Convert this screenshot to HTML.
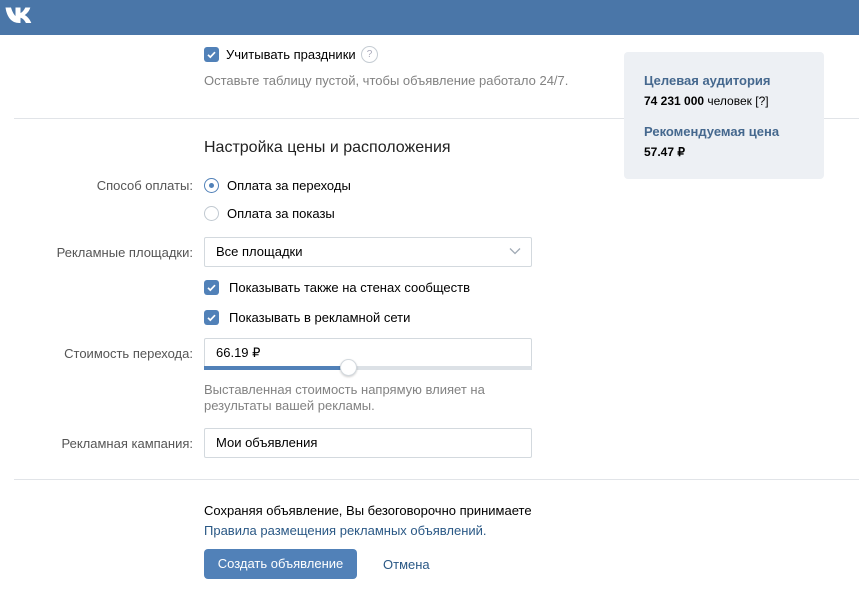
<!DOCTYPE html>
<html><head><meta charset="utf-8"><style>
*{margin:0;padding:0;box-sizing:border-box}
body{width:859px;height:602px;background:#fff;font-family:"Liberation Sans",sans-serif;font-size:13px;color:#000;position:relative;overflow:hidden}
.a{position:absolute;white-space:nowrap}
.hdr{left:0;top:0;width:859px;height:35px;background:#4a76a8}
.lbl{color:#555;text-align:right;width:193px;left:0}
.cb{width:15px;height:15px;background:#5181b8;border-radius:3px}
.cb svg{position:absolute;left:2px;top:2px}
.rd{width:15px;height:15px;border:1px solid #c1c9d1;border-radius:50%;background:#fff}
.rd.on{border-color:#5181b8}
.rd.on::after{content:"";position:absolute;left:4px;top:4px;width:5px;height:5px;border-radius:50%;background:#5181b8}
.box{border:1px solid #d3d9de;border-radius:2px;background:#fff;height:30px;padding:0 11px;line-height:28px}
.sep{height:1px;background:#e1e4e8;left:14px;width:845px}
.gray{color:#828282}
</style></head><body>
<div class="a hdr"></div>
<svg class="a" style="left:5px;top:6px" width="32" height="18" viewBox="0 0 32 18"><path d="M0.5 1.5h5.5c1 3.5 2.8 7 4.5 8.5V1.5h5v5.5c1.6-.5 3.7-3 4.8-5.5h5c-.9 3.5-3.6 6.2-5.6 7.6 2 .9 5 3.7 6.6 7.9h-5.4c-1.2-2.7-3.4-5-5.4-5.3V17h-1.2C6.6 17 1.9 11.2.5 1.5z" fill="#fff"/></svg>

<div class="a cb" style="left:204px;top:47px"><svg width="11" height="11" viewBox="0 0 11 11"><path d="M2 5.8l2.3 2.3L9 3.2" stroke="#fff" stroke-width="1.7" fill="none"/></svg></div>
<div class="a" style="left:226px;top:47px">Учитывать праздники</div>
<div class="a" style="left:361px;top:46px;width:17px;height:17px;border:1px solid #c5ccd3;border-radius:50%;color:#aab;font-size:10px;text-align:center;line-height:15px">?</div>
<div class="a gray" style="left:204px;top:73px">Оставьте таблицу пустой, чтобы объявление работало 24/7.</div>

<div class="a sep" style="top:118px"></div>
<div class="a" style="left:624px;top:52px;width:200px;height:127px;background:#edf0f4;border-radius:4px"></div>
<div class="a" style="left:644px;top:73px;color:#45688e;font-weight:bold;font-size:13px">Целевая аудитория</div>
<div class="a" style="left:644px;top:94px;font-size:12px"><b>74 231 000</b> человек [?]</div>
<div class="a" style="left:644px;top:124px;color:#45688e;font-weight:bold;font-size:13px">Рекомендуемая цена</div>
<div class="a" style="left:644px;top:145px;font-size:12px;font-weight:bold">57.47 ₽</div>

<div class="a" style="left:204px;top:139px;font-size:16px;color:#222">Настройка цены и расположения</div>

<div class="a lbl" style="top:178px">Способ оплаты:</div>
<div class="a rd on" style="left:204px;top:178px"></div>
<div class="a" style="left:227px;top:178px">Оплата за переходы</div>
<div class="a rd" style="left:204px;top:206px"></div>
<div class="a" style="left:227px;top:206px">Оплата за показы</div>

<div class="a lbl" style="top:245px">Рекламные площадки:</div>
<div class="a box" style="left:204px;top:237px;width:328px">Все площадки</div>
<svg class="a" style="left:509px;top:247px" width="12" height="8" viewBox="0 0 12 8"><path d="M1 1.5l5 5 5-5" stroke="#a0aab5" stroke-width="1.3" fill="none"/></svg>

<div class="a cb" style="left:204px;top:280px"><svg width="11" height="11" viewBox="0 0 11 11"><path d="M2 5.8l2.3 2.3L9 3.2" stroke="#fff" stroke-width="1.7" fill="none"/></svg></div>
<div class="a" style="left:229px;top:280px">Показывать также на стенах сообществ</div>
<div class="a cb" style="left:204px;top:310px"><svg width="11" height="11" viewBox="0 0 11 11"><path d="M2 5.8l2.3 2.3L9 3.2" stroke="#fff" stroke-width="1.7" fill="none"/></svg></div>
<div class="a" style="left:229px;top:310px">Показывать в рекламной сети</div>

<div class="a lbl" style="top:346px">Стоимость перехода:</div>
<div class="a box" style="left:204px;top:338px;width:328px;height:31px">66.19 ₽</div>
<div class="a" style="left:204px;top:366px;width:328px;height:4px;background:#dce1e6"></div>
<div class="a" style="left:204px;top:366px;width:144px;height:4px;background:#5181b8"></div>
<div class="a" style="left:340px;top:359px;width:17px;height:17px;border-radius:50%;background:#fff;border:1px solid #d3d9de;box-shadow:0 1px 2px rgba(0,0,0,.2)"></div>
<div class="a gray" style="left:204px;top:382px;line-height:16px">Выставленная стоимость напрямую влияет на<br>результаты вашей рекламы.</div>

<div class="a lbl" style="top:436px">Рекламная кампания:</div>
<div class="a box" style="left:204px;top:428px;width:328px">Мои объявления</div>

<div class="a sep" style="top:479px"></div>
<div class="a" style="left:204px;top:503px">Сохраняя объявление, Вы безоговорочно принимаете</div>
<div class="a" style="left:204px;top:523px;color:#2a5885">Правила размещения рекламных объявлений.</div>
<div class="a" style="left:204px;top:549px;width:153px;height:30px;background:#5181b8;border-radius:4px;color:#fff;text-align:center;line-height:30px">Создать объявление</div>
<div class="a" style="left:383px;top:557px;color:#2a5885">Отмена</div>
</body></html>
